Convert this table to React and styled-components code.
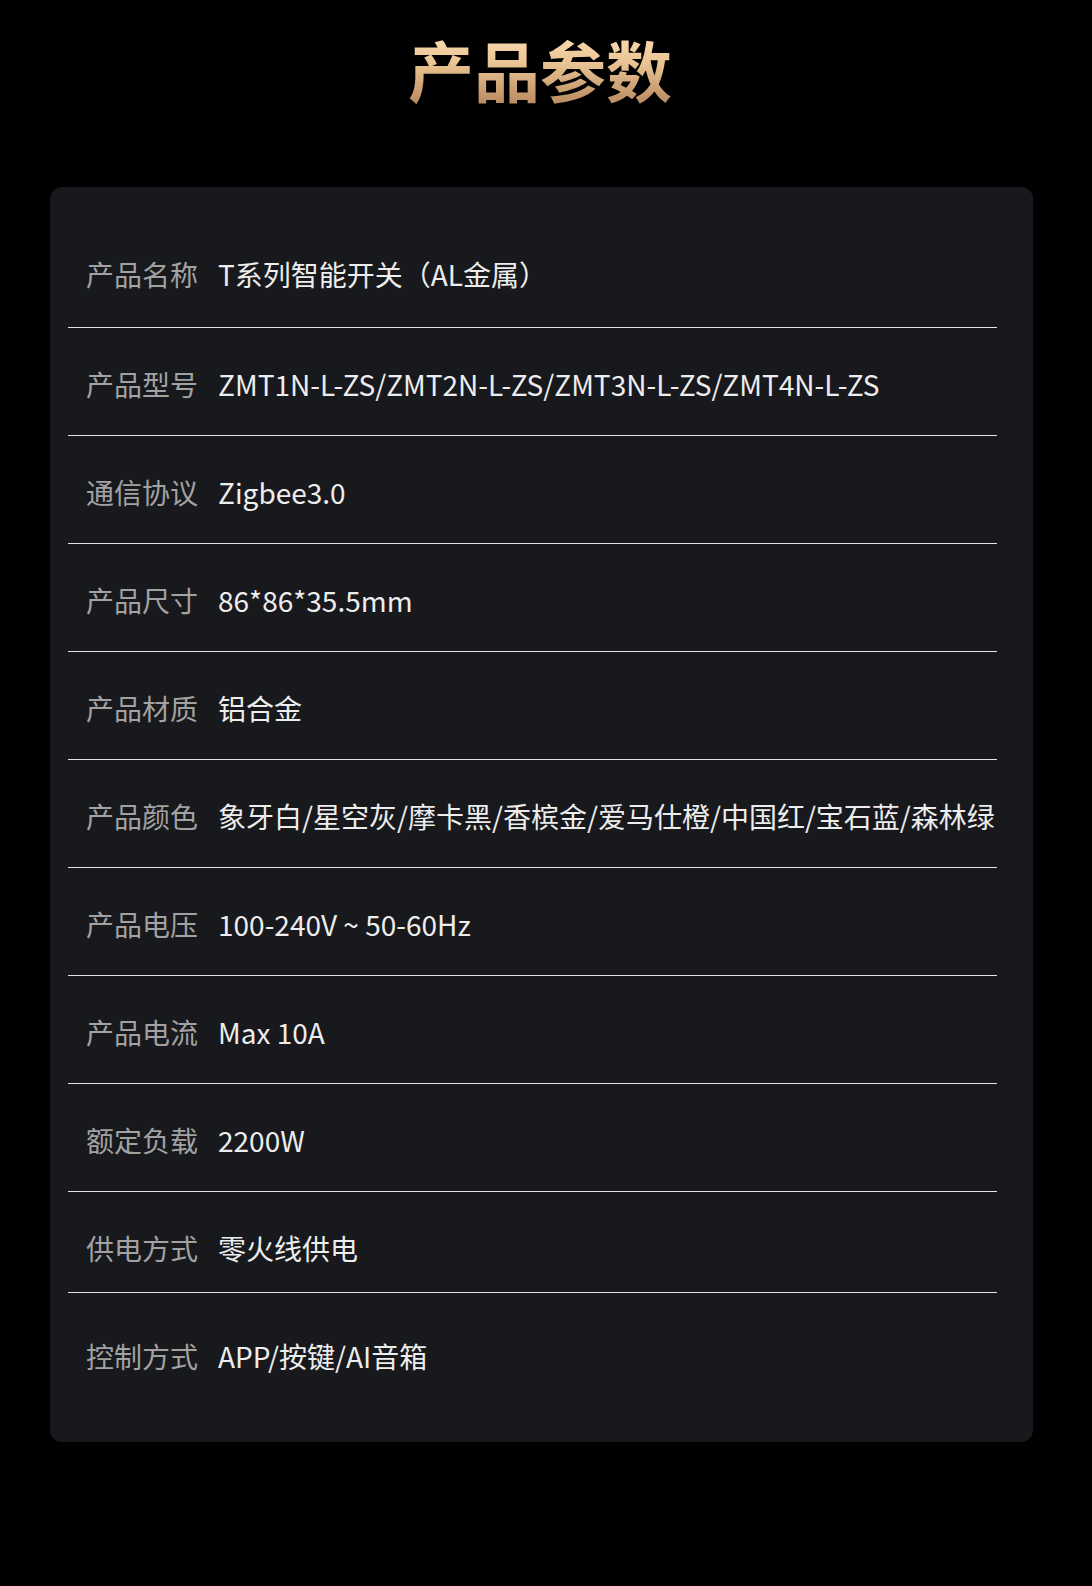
import React from 'react';
import styled, { createGlobalStyle } from 'styled-components';

const GlobalStyle = createGlobalStyle`
  html, body {
    margin: 0;
    padding: 0;
    background: #000;
  }
  body {
    font-family: 'Noto Sans CJK SC', 'Noto Sans', sans-serif;
  }
`;

const StyledPage = styled.div`
  width: 1092px;
  min-height: 1586px;
  padding-top: 27px;
  box-sizing: border-box;
  background: #000;
`;

const StyledTitle = styled.h1`
  margin: 0;
  padding-right: 12px;
  text-align: center;
  font-size: 66px;
  line-height: 82px;
  font-weight: 700;
  background: linear-gradient(180deg, #fee4bb 0%, #e9c392 45%, #b3845a 100%);
  -webkit-background-clip: text;
  background-clip: text;
  color: transparent;
`;

const StyledCard = styled.div`
  margin: 78px 0 0 50px;
  width: 983px;
  box-sizing: border-box;
  padding: 31px 36px 0 18px;
  background: #18191d;
  border-radius: 12px;
`;

const StyledRow = styled.div`
  display: flex;
  align-items: flex-start;
  box-sizing: border-box;
  height: ${({ $height }) => $height}px;
  padding: ${({ $offset }) => $offset}px 0 0 18px;
  border-bottom: 1px solid #e4e4e4;
  font-size: 28px;
  line-height: 40px;

  &:last-child {
    border-bottom: none;
  }
`;

const StyledLabel = styled.span`
  flex: none;
  color: #a2a2a2;
  margin-right: 20px;
`;

const StyledValue = styled.span`
  color: #ededed;
  white-space: nowrap;
`;

const params = [
  { label: '产品名称', value: 'T系列智能开关（AL金属）', height: 110 },
  { label: '产品型号', value: 'ZMT1N-L-ZS/ZMT2N-L-ZS/ZMT3N-L-ZS/ZMT4N-L-ZS' },
  { label: '通信协议', value: 'Zigbee3.0' },
  { label: '产品尺寸', value: '86*86*35.5mm' },
  { label: '产品材质', value: '铝合金' },
  { label: '产品颜色', value: '象牙白/星空灰/摩卡黑/香槟金/爱马仕橙/中国红/宝石蓝/森林绿' },
  { label: '产品电压', value: '100-240V ~ 50-60Hz' },
  { label: '产品电流', value: 'Max 10A' },
  { label: '额定负载', value: '2200W' },
  { label: '供电方式', value: '零火线供电', height: 101 },
  { label: '控制方式', value: 'APP/按键/AI音箱', height: 149, offset: 43 },
];

const App = () => (
  <StyledPage>
    <GlobalStyle />
    <StyledTitle>产品参数</StyledTitle>
    <StyledCard>
      {params.map(({ label, value, height = 108, offset = 36 }) => (
        <StyledRow key={label} $height={height} $offset={offset}>
          <StyledLabel>{label}</StyledLabel>
          <StyledValue>{value}</StyledValue>
        </StyledRow>
      ))}
    </StyledCard>
  </StyledPage>
);

export default App;
